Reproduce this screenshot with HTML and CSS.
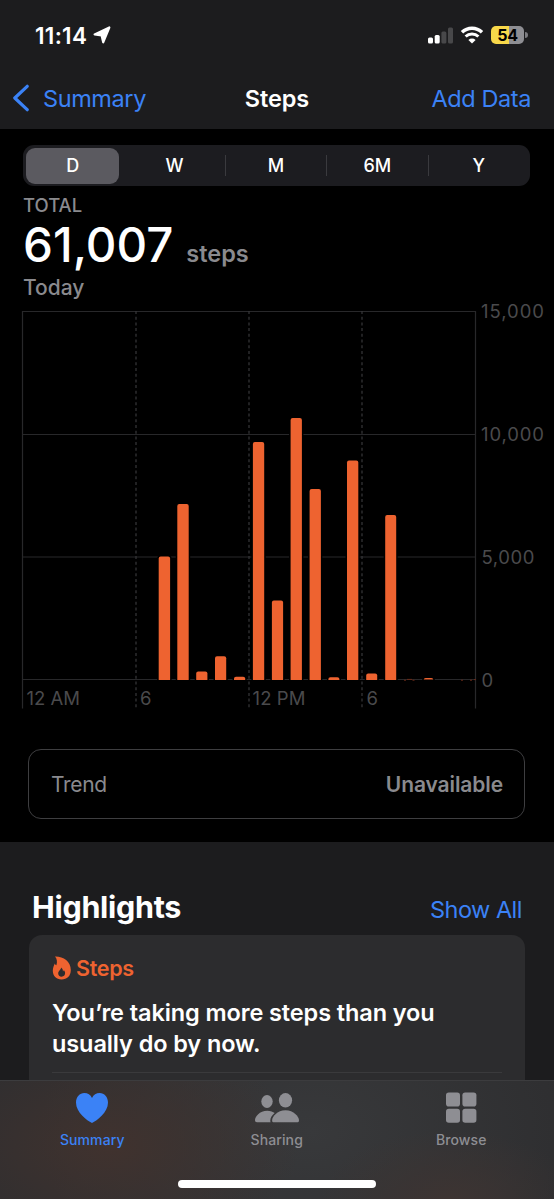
FILE: index.html
```html
<!DOCTYPE html>
<html lang="en">
<head>
    <meta charset="utf-8">
    <title>Steps</title>
    <link rel="stylesheet" href="styles.css">
</head>
<body>
<div class="screen">
    <header class="header">
        <div class="status">
            <div class="clock">
                <span class="time">11:14</span>
                <svg width="18" height="18" viewBox="0 0 18 18"><path d="M16.3 1.5 10.2 16.3 8.6 9.5 1.6 8.4Z" fill="#fff" stroke="#fff" stroke-width="2.2" stroke-linejoin="round"/></svg>
            </div>
            <div class="indicators">
                <svg width="25" height="17" viewBox="0 0 25 17">
                    <rect x="0" y="10.5" width="5" height="6" rx="1.5" fill="#fff"/>
                    <rect x="6.7" y="8" width="5" height="8.5" rx="1.5" fill="#fff"/>
                    <rect x="13.4" y="4.5" width="5" height="12" rx="1.5" fill="#48484a"/>
                    <rect x="20" y="0.5" width="5" height="16" rx="1.5" fill="#48484a"/>
                </svg>
                <svg class="wifi" width="24" height="18" viewBox="0 0 24 18">
                    <path d="M2 6.3a14.3 14.3 0 0 1 20 0" fill="none" stroke="#fff" stroke-width="3.4"/>
                    <path d="M5.6 10.5a9.2 9.2 0 0 1 12.8 0" fill="none" stroke="#fff" stroke-width="3"/>
                    <path d="M8.4 13.9a5.2 5.2 0 0 1 7.2 0L12 17.5Z" fill="#fff"/>
                </svg>
                <div class="battery">54</div>
                <svg width="3" height="6" viewBox="0 0 3 6"><path d="M0 0a3 3 0 0 1 0 6Z" fill="#7c7c80"/></svg>
            </div>
        </div>
        <nav class="nav">
            <a class="back">
                <svg width="17" height="28" viewBox="0 0 17 28"><path d="M15.2 2.3 2.8 14l12.4 11.7" fill="none" stroke="#3b82f6" stroke-width="3.2" stroke-linecap="round" stroke-linejoin="round"/></svg>
                <span>Summary</span>
            </a>
            <h1>Steps</h1>
            <a class="add">Add Data</a>
        </nav>
    </header>

    <main class="main">
        <div class="segments">
            <div class="segment selected">D</div>
            <div class="segment">W</div>
            <div class="segment">M</div>
            <div class="segment">6M</div>
            <div class="segment">Y</div>
        </div>
        <div class="total">
            <div class="label">TOTAL</div>
            <div class="value"><span class="number">61,007</span><span class="unit">steps</span></div>
            <div class="period">Today</div>
        </div>

        <svg class="chart" width="554" height="410" viewBox="0 302 554 410">
            <g class="grid">
                <path d="M22.5 311.5H475.5M22.5 434.5H475.5M22.5 557H475.5M22.5 679.5H475.5"/>
                <path d="M22.5 311V708.5M475.5 311V708.5"/>
                <path class="dashed" d="M136 311V709M249 311V709M362 311V709"/>
            </g>
            <g class="bars">
                <path d="M158.7 680V558.5q0-2 2-2h7.4q2 0 2 2V680z"/>
                <path d="M177.3 680V506q0-2 2-2h7.4q2 0 2 2V680z"/>
                <path d="M196.2 680V673.5q0-2 2-2h7.2q2 0 2 2V680z"/>
                <path d="M215 680V658.3q0-2 2-2h7.2q2 0 2 2V680z"/>
                <path d="M234 680V678.5q0-1.7 2-1.7h7.2q2 0 2 1.7V680z"/>
                <path d="M252.9 680V444q0-2 2-2h7.3q2 0 2 2V680z"/>
                <path d="M271.9 680V602.5q0-2 2-2h7.2q2 0 2 2V680z"/>
                <path d="M290.6 680V420q0-2 2-2h7.3q2 0 2 2V680z"/>
                <path d="M309.6 680V491q0-2 2-2h7.3q2 0 2 2V680z"/>
                <path d="M328.4 680V679q0-1.7 2-1.7h7q2 0 2 1.7V680z"/>
                <path d="M347 680V462.5q0-2 2-2h7.3q2 0 2 2V680z"/>
                <path d="M366.2 680V675.5q0-2 2-2h7q2 0 2 2V680z"/>
                <path d="M385.2 680V517q0-2 2-2h7q2 0 2 2V680z"/>
                <path d="M423.7 679.6q0-1.6 2-1.6h5.6q2 0 2 1.6z"/>
            </g>
            <path class="traces" d="M404 680.2h2M407 679.4h5M412.5 680.2h2M461 680.2h2M470 680.2h2M474 679.6h2"/>
            <g class="axis">
                <text x="481" y="318.4" textLength="63">15,000</text>
                <text x="481" y="441.4" textLength="63">10,000</text>
                <text x="481.5" y="563.6" textLength="53">5,000</text>
                <text x="481.5" y="686.6">0</text>
                <text x="26.5" y="704.8" textLength="53.5">12 AM</text>
                <text x="140" y="704.8">6</text>
                <text x="252.5" y="704.8" textLength="53">12 PM</text>
                <text x="366.5" y="704.8">6</text>
            </g>
        </svg>

        <div class="trend">
            <span>Trend</span>
            <b>Unavailable</b>
        </div>
    </main>

    <section class="highlights">
        <div class="heading">
            <h2>Highlights</h2>
            <a>Show All</a>
        </div>
        <div class="card">
            <div class="kind">
                <svg width="20" height="24" viewBox="0 0 20 24">
                    <path fill-rule="evenodd" d="M3 .5C11 .2 18.8 5 18.8 14c0 6-3.8 9.500-9.200 9.500S.8 20 .8 14.800c0-3 1.200-5.400 2-7.400.4 1 .9 1.500 1.600 1.800C5.500 6 5 2.600 3 .5ZM9 11.500c.3 2-2.800 3.300-2.800 6.100 0 1.900 1.300 3.100 3.400 3.100s3.500-1.300 3.500-3.600c0-1.300-.5-2.400-1.300-3.200-.1.800-.4 1.200-.9 1.400.1-1.700-.6-3.100-1.900-3.800Z" fill="#ee6330"/>
                </svg>
                <span>Steps</span>
            </div>
            <p>You’re taking more steps than you<br>usually do by now.</p>
        </div>
    </section>

    <footer class="tabbar">
        <div class="tabs">
            <a class="tab active">
                <svg width="34" height="32" viewBox="0 0 34 32"><path d="M17 31C12 28.5 1 20.5 1 10.5 1 5 4.7 1 9.3 1c3.500 0 6.200 1.700 7.700 4.900C18.500 2.700 21.200 1 24.700 1 29.300 1 33 5 33 10.500 33 20.500 22 28.500 17 31Z" fill="#3b82f6"/></svg>
                <span>Summary</span>
            </a>
            <a class="tab">
                <svg width="46" height="32" viewBox="0 0 46 32" fill="#8e8e93">
                    <ellipse cx="13" cy="9.5" rx="5.7" ry="6.5"/>
                    <path d="M3 30.300C1.700 30.300 1 29.600 1 28.300c0-3.800 4.500-9.600 12.300-9.600 3.200 0 5.700 1 7.400 2.400-2.700 2-4.400 5-4.400 7.500 0 .6.1 1.200.3 1.700Z"/>
                    <ellipse cx="31.5" cy="8.3" rx="6.6" ry="7.2"/>
                    <path d="M20.200 30.300c-1.500 0-2.100-.7-2.100-1.900 0-3.800 5.200-10.100 13.400-10.100S45 24.600 45 28.400c0 1.200-.7 1.900-2.200 1.900Z"/>
                </svg>
                <span>Sharing</span>
            </a>
            <a class="tab">
                <svg width="32" height="32" viewBox="0 0 32 32" fill="#8e8e93">
                    <rect x="1" y=".5" width="14" height="14" rx="2.8"/>
                    <rect x="17.4" y=".5" width="14" height="14" rx="2.8"/>
                    <rect x="1" y="16.8" width="14" height="14" rx="2.8"/>
                    <rect x="17.4" y="16.8" width="14" height="14" rx="2.8"/>
                </svg>
                <span>Browse</span>
            </a>
        </div>
        <div class="home"></div>
    </footer>
</div>
</body>
</html>
```
FILE: styles.css
```css
* {
    box-sizing: border-box;
}

body {
    margin: 0;
    background: #000;
    color: #fff;
    font-family: Inter, "Liberation Sans", sans-serif;
}

h1, h2, p {
    margin: 0;
}

svg {
    display: block;
    flex: none;
}

.screen {
    width: 554px;
    height: 1199px;
    overflow: hidden;
    display: flex;
    flex-direction: column;
}

.header {
    height: 129px;
    flex: none;
    background: #1c1c1e;
}

.status {
    height: 70px;
    padding: 0 26px 0 35px;
    display: flex;
    justify-content: space-between;
    align-items: center;
}

.clock {
    display: flex;
    align-items: center;
    gap: 6px;
}

.time {
    font-size: 22.5px;
    font-weight: 600;
    letter-spacing: 0.3px;
}

.indicators {
    display: flex;
    align-items: center;
}

.wifi {
    margin: 0 7px 0 7px;
}

.battery {
    width: 33px;
    height: 18px;
    margin-right: 1px;
    border-radius: 5px;
    background: linear-gradient(to right, #f8d84a 54%, #8e8e93 54%);
    color: #000;
    font-size: 16px;
    font-weight: 700;
    letter-spacing: -0.3px;
    line-height: 18px;
    text-align: center;
}

.nav {
    height: 56px;
    padding: 0 23px;
    display: grid;
    grid-template-columns: 1fr auto 1fr;
    align-items: center;
    color: #3b82f6;
    font-size: 23.5px;
    letter-spacing: -0.4px;
}

.back {
    margin-left: -11px;
    display: flex;
    align-items: center;
    gap: 14px;
}

.nav h1 {
    color: #fff;
    font-size: 23.5px;
    font-weight: 600;
    letter-spacing: -0.1px;
}

.add {
    text-align: right;
}

.main {
    height: 713px;
    flex: none;
    padding-top: 16px;
}

.segments {
    height: 41px;
    margin: 0 24px 0 23px;
    border-radius: 11px;
    background: #1c1c20;
    display: grid;
    grid-template-columns: repeat(5, 1fr);
    align-items: center;
}

.segment {
    height: 21px;
    margin-left: -1px;
    padding-right: 1px;
    border-left: 1px solid #3a3a3e;
    font-size: 18px;
    font-weight: 500;
    line-height: 21px;
    text-align: center;
}

.segment.selected {
    height: 36px;
    margin: 0 5px 0 3px;
    padding: 0;
    border: 0;
    border-radius: 9px;
    background: #5b5a60;
    line-height: 36px;
}

.selected + .segment {
    border-color: transparent;
}

.total {
    height: 116px;
    padding-left: 23px;
    color: #8a8a8e;
    font-weight: 500;
}

.label {
    height: 37px;
    font-size: 18.5px;
    line-height: 39px;
}

.value {
    height: 48px;
    display: flex;
    align-items: baseline;
    line-height: 44px;
}

.number {
    color: #fff;
    font-size: 47.5px;
}

.unit {
    margin-left: 13px;
    font-size: 23.5px;
    font-weight: 600;
}

.period {
    font-size: 21px;
    line-height: 34px;
}

.chart {
    overflow: visible;
}

.grid {
    fill: none;
    stroke: #28282a;
    stroke-width: 1.2;
}

.dashed {
    stroke: #38383a;
    stroke-dasharray: 3 2.7;
}

.bars {
    fill: #ee6330;
    stroke: #000;
    stroke-width: 3;
    paint-order: stroke;
}

.traces {
    stroke: #6b2a18;
}

.axis {
    fill: #4a4a4c;
    font-size: 18.5px;
}

.trend {
    height: 70px;
    margin: 37px 29px 0 28px;
    padding: 0 21px 0 22px;
    border: 1.5px solid #3e3e40;
    border-radius: 13px;
    display: flex;
    justify-content: space-between;
    align-items: center;
    color: #8a8a8e;
    font-size: 21px;
    letter-spacing: -0.3px;
}

.trend b {
    font-weight: 600;
    letter-spacing: -0.1px;
}

.highlights {
    flex: 1;
    min-height: 0;
    padding: 45px 29px 0;
    background: #1c1c1e;
    display: flex;
    flex-direction: column;
}

.heading {
    height: 48px;
    padding: 0 3px;
    display: flex;
    justify-content: space-between;
    align-items: baseline;
    line-height: 40px;
}

.heading h2 {
    font-size: 30.5px;
    font-weight: 700;
    letter-spacing: -0.3px;
}

.heading a {
    color: #3b82f6;
    font-size: 23.5px;
    letter-spacing: -0.5px;
}

.card {
    flex: 1;
    padding: 20px 23px 0;
    border-radius: 13px 13px 0 0;
    background: #2c2c2e;
}

.kind {
    height: 26px;
    display: flex;
    align-items: center;
    gap: 4px;
    color: #ee6330;
    font-size: 21.5px;
    font-weight: 600;
    letter-spacing: -0.3px;
}

.card p {
    height: 92px;
    padding-top: 16px;
    border-bottom: 1px solid #3a3a3c;
    font-size: 23.5px;
    font-weight: 600;
    letter-spacing: -0.1px;
    line-height: 31px;
    white-space: nowrap;
}

.tabbar {
    height: 119px;
    flex: none;
    border-top: 1px solid #3c3c3e;
    background:
        radial-gradient(ellipse 190px 110px at 110px 65px, #40322e, transparent),
        radial-gradient(ellipse 130px 70px at 450px 119px, #3d3432, transparent),
        radial-gradient(ellipse 270px 180px at 310px 50px, #38393b, transparent),
        #2e2e30;
}

.tabs {
    height: 97px;
    padding-top: 11px;
    display: grid;
    grid-template-columns: repeat(3, 184.5px);
}

.tab {
    display: flex;
    flex-direction: column;
    align-items: center;
    gap: 7px;
    color: #8e8e93;
    font-size: 14px;
    font-weight: 500;
    letter-spacing: 0.1px;
    line-height: 18px;
}

.active {
    color: #3b82f6;
}

.home {
    width: 198px;
    height: 8px;
    margin: 2px auto 0;
    border-radius: 4px;
    background: #fff;
}
```
